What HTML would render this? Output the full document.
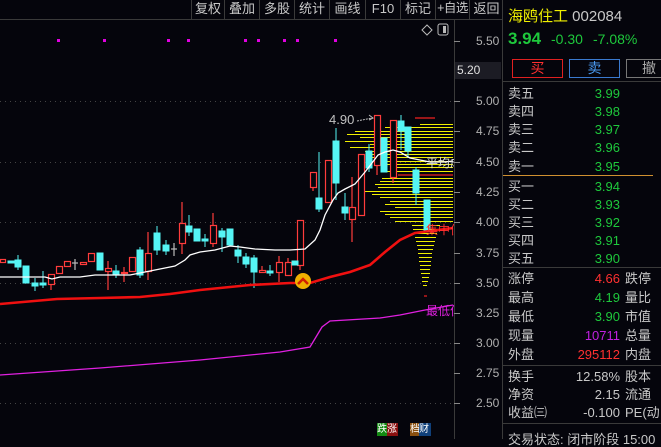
<!DOCTYPE html>
<html><head><meta charset="utf-8"><style>
*{margin:0;padding:0;box-sizing:border-box}
body{width:661px;height:439px;background:#05050c;overflow:hidden;position:relative;font-family:"Liberation Sans","Noto Sans CJK SC",sans-serif;color:#c8c8c8}
.a{position:absolute;white-space:nowrap}
.tb{position:absolute;top:0;height:19px;border-left:1px solid #3a3a3a;font-size:13px;color:#c8c8c8;text-align:center;line-height:17px;white-space:nowrap;overflow:hidden}
.l{position:absolute;left:508px;font-size:13px;color:#c8c8c8;line-height:14px}
.v{position:absolute;right:41px;font-size:13px;line-height:14px;text-align:right}
.r{position:absolute;left:625px;font-size:13px;color:#c8c8c8;line-height:14px}
.g{color:#1ec83c}
.ax{position:absolute;left:476px;font-size:12px;color:#b0b0b0;line-height:12px}
</style></head><body>
<div class="a" style="left:0;top:19px;width:502px;height:1px;background:#3a3a3a"></div>
<div class="tb" style="left:191px;width:33px">复权</div>
<div class="tb" style="left:224px;width:35px">叠加</div>
<div class="tb" style="left:259px;width:35px">多股</div>
<div class="tb" style="left:294px;width:35px">统计</div>
<div class="tb" style="left:329px;width:36px">画线</div>
<div class="tb" style="left:365px;width:35px">F10</div>
<div class="tb" style="left:400px;width:35px">标记</div>
<div class="tb" style="left:435px;width:34px;font-size:12.5px;letter-spacing:-0.5px">+自选</div>
<div class="tb" style="left:469px;width:34px">返回</div>
<div class="a" style="left:502px;top:0;width:1px;height:439px;background:#3a3a3a"></div>
<div class="a" style="left:454px;top:20px;width:1px;height:419px;background:#3a3a3a"></div>

<svg class="a" style="left:0;top:0" width="502" height="439">
<g stroke="#444" stroke-dasharray="1,4" stroke-width="1">
<line x1="0" y1="101.5" x2="454" y2="101.5"/><line x1="0" y1="162.5" x2="454" y2="162.5"/><line x1="0" y1="222.5" x2="454" y2="222.5"/><line x1="0" y1="283.5" x2="454" y2="283.5"/><line x1="0" y1="343.5" x2="454" y2="343.5"/><line x1="0" y1="403.5" x2="454" y2="403.5"/>
</g>
<g stroke="#888"><line x1="454" y1="41.5" x2="460" y2="41.5"/><line x1="454" y1="101.5" x2="460" y2="101.5"/><line x1="454" y1="131.5" x2="460" y2="131.5"/><line x1="454" y1="162.5" x2="460" y2="162.5"/><line x1="454" y1="192.5" x2="460" y2="192.5"/><line x1="454" y1="222.5" x2="460" y2="222.5"/><line x1="454" y1="253.5" x2="460" y2="253.5"/><line x1="454" y1="283.5" x2="460" y2="283.5"/><line x1="454" y1="313.5" x2="460" y2="313.5"/><line x1="454" y1="343.5" x2="460" y2="343.5"/><line x1="454" y1="373.5" x2="460" y2="373.5"/><line x1="454" y1="403.5" x2="460" y2="403.5"/></g>
<g fill="#e000e0"><rect x="57" y="39" width="3" height="3"/><rect x="103" y="39" width="3" height="3"/><rect x="167" y="39" width="3" height="3"/><rect x="187" y="39" width="3" height="3"/><rect x="244" y="39" width="3" height="3"/><rect x="257" y="39" width="3" height="3"/><rect x="283" y="39" width="3" height="3"/><rect x="296" y="39" width="3" height="3"/><rect x="334" y="39" width="3" height="3"/></g>
<path d="M422 30 l5 -5 l5 5 l-5 5z" fill="none" stroke="#bbb"/>
<rect x="438" y="24" width="10" height="11" rx="2" fill="none" stroke="#bbb"/><rect x="443" y="26" width="3" height="7" fill="#bbb"/>
<g stroke="#f0f000" stroke-width="1">
<line x1="420" y1="124.5" x2="453" y2="124.5"/><line x1="385" y1="127.5" x2="453" y2="127.5"/><line x1="355" y1="131.5" x2="453" y2="131.5"/><line x1="347" y1="134.5" x2="453" y2="134.5"/><line x1="360" y1="137.5" x2="453" y2="137.5"/><line x1="345" y1="141.5" x2="453" y2="141.5"/><line x1="370" y1="144.5" x2="453" y2="144.5"/><line x1="350" y1="147.5" x2="453" y2="147.5"/><line x1="365" y1="151.5" x2="453" y2="151.5"/><line x1="372" y1="154.5" x2="453" y2="154.5"/><line x1="370" y1="157.5" x2="453" y2="157.5"/><line x1="380" y1="161.5" x2="453" y2="161.5"/><line x1="375" y1="164.5" x2="453" y2="164.5"/><line x1="395" y1="167.5" x2="453" y2="167.5"/><line x1="385" y1="171.5" x2="453" y2="171.5"/><line x1="382" y1="178.5" x2="453" y2="178.5"/><line x1="380" y1="181.5" x2="453" y2="181.5"/><line x1="375" y1="184.5" x2="453" y2="184.5"/><line x1="378" y1="187.5" x2="453" y2="187.5"/><line x1="365" y1="191.5" x2="453" y2="191.5"/><line x1="372" y1="194.5" x2="453" y2="194.5"/><line x1="380" y1="197.5" x2="453" y2="197.5"/><line x1="390" y1="201.5" x2="453" y2="201.5"/><line x1="385" y1="204.5" x2="453" y2="204.5"/><line x1="395" y1="207.5" x2="453" y2="207.5"/><line x1="380" y1="211.5" x2="453" y2="211.5"/><line x1="385" y1="214.5" x2="453" y2="214.5"/><line x1="390" y1="217.5" x2="453" y2="217.5"/><line x1="395" y1="221.5" x2="453" y2="221.5"/>
<line x1="412" y1="225.5" x2="440" y2="225.5"/><line x1="413" y1="229.5" x2="438" y2="229.5"/><line x1="414" y1="233.5" x2="437" y2="233.5"/><line x1="415" y1="237.5" x2="436" y2="237.5"/><line x1="416" y1="241.5" x2="435" y2="241.5"/><line x1="417" y1="245.5" x2="434" y2="245.5"/><line x1="418" y1="249.5" x2="433" y2="249.5"/><line x1="418" y1="253.5" x2="432" y2="253.5"/><line x1="419" y1="257.5" x2="432" y2="257.5"/><line x1="419" y1="261.5" x2="431" y2="261.5"/><line x1="420" y1="265.5" x2="431" y2="265.5"/><line x1="420" y1="269.5" x2="430" y2="269.5"/><line x1="421" y1="273.5" x2="430" y2="273.5"/><line x1="422" y1="277.5" x2="429" y2="277.5"/><line x1="422" y1="281.5" x2="428" y2="281.5"/><line x1="423" y1="285.5" x2="427" y2="285.5"/>
</g>
<g stroke="#f02020" stroke-width="1.2"><line x1="415" y1="118" x2="435" y2="118"/><line x1="398" y1="175" x2="453" y2="175"/><line x1="424" y1="296" x2="427" y2="296"/></g>
<g stroke-width="1.2">
<g stroke="#ff3c3c" fill="#05050c">
<rect x="0.5" y="259.5" width="5" height="3"/><line x1="51" y1="285" x2="51" y2="290"/><rect x="48.5" y="274.5" width="6" height="10"/><rect x="56.5" y="266.5" width="6" height="7"/><rect x="64.5" y="261.5" width="6" height="5"/><rect x="80.5" y="262.5" width="6" height="2"/><rect x="88.5" y="253.5" width="6" height="8"/>
<line x1="108" y1="261" x2="108" y2="290"/><rect x="105.5" y="268.5" width="6" height="3"/><line x1="124" y1="267" x2="124" y2="282"/><rect x="121.5" y="272.5" width="6" height="1"/><rect x="129.5" y="257.5" width="6" height="14"/>
<line x1="148" y1="232" x2="148" y2="280"/><rect x="145.5" y="253.5" width="6" height="18"/><line x1="182" y1="202" x2="182" y2="254"/><rect x="179.5" y="223.5" width="6" height="20"/><line x1="213" y1="213" x2="213" y2="247"/><rect x="210.5" y="225.5" width="6" height="18"/>
<line x1="262" y1="266" x2="262" y2="272"/><rect x="259.5" y="270.5" width="6" height="2"/><line x1="279" y1="256" x2="279" y2="282"/><rect x="276.5" y="262.5" width="6" height="10"/><line x1="288" y1="258" x2="288" y2="276"/><rect x="285.5" y="262.5" width="6" height="13"/>
<line x1="300" y1="260" x2="300" y2="270"/><rect x="297.5" y="220.5" width="6" height="45"/><line x1="313" y1="187" x2="313" y2="191"/><rect x="310.5" y="172.5" width="6" height="15"/>
<rect x="325.5" y="160.5" width="6" height="42"/><line x1="352" y1="177" x2="352" y2="242"/><rect x="349.5" y="207.5" width="6" height="12"/><rect x="358.5" y="154.5" width="6" height="61"/><line x1="377" y1="165" x2="377" y2="175"/><rect x="374.5" y="115.5" width="6" height="50"/><line x1="393" y1="177" x2="393" y2="183"/><rect x="390.5" y="120.5" width="6" height="57"/>
</g>
<g stroke="#bbb"><line x1="75" y1="259" x2="75" y2="270"/><line x1="72" y1="263" x2="78" y2="263"/><line x1="174" y1="243" x2="174" y2="256"/><line x1="171" y1="249" x2="177" y2="249"/></g>
<g fill="#55f5f5" stroke="#55f5f5" stroke-width="1">
<rect x="8" y="261" width="6" height="2"/><line x1="18" y1="255" x2="18" y2="270"/><rect x="15" y="260" width="6" height="7"/><rect x="23" y="266" width="6" height="17"/><line x1="35" y1="278" x2="35" y2="291"/><rect x="32" y="283" width="6" height="3"/><line x1="43" y1="271" x2="43" y2="288"/><rect x="40" y="283" width="6" height="2"/>
<rect x="97" y="253" width="6" height="17"/><line x1="116" y1="265" x2="116" y2="278"/><rect x="113" y="271" width="6" height="3"/><line x1="140" y1="247" x2="140" y2="278"/><rect x="137" y="250" width="6" height="25"/>
<line x1="157" y1="226" x2="157" y2="255"/><rect x="154" y="233" width="6" height="17"/><line x1="166" y1="240" x2="166" y2="255"/><rect x="163" y="245" width="6" height="6"/><line x1="189" y1="215" x2="189" y2="236"/><rect x="186" y="226" width="6" height="6"/><rect x="194" y="229" width="6" height="12"/><line x1="205" y1="234" x2="205" y2="247"/><rect x="202" y="239" width="6" height="2"/>
<line x1="222" y1="228" x2="222" y2="252"/><rect x="219" y="231" width="6" height="6"/><rect x="227" y="229" width="6" height="16"/><line x1="238" y1="245" x2="238" y2="263"/><rect x="235" y="250" width="6" height="6"/><line x1="246" y1="253" x2="246" y2="268"/><rect x="243" y="257" width="6" height="7"/><line x1="254" y1="255" x2="254" y2="288"/><rect x="251" y="258" width="6" height="14"/><line x1="270" y1="265" x2="270" y2="276"/><rect x="267" y="271" width="6" height="2"/><rect x="292" y="261" width="6" height="4"/>
<line x1="319" y1="152" x2="319" y2="212"/><rect x="316" y="198" width="6" height="11"/><line x1="336" y1="128" x2="336" y2="200"/><rect x="333" y="141" width="6" height="42"/><line x1="345" y1="193" x2="345" y2="220"/><rect x="342" y="207" width="6" height="6"/>
<line x1="369" y1="144" x2="369" y2="172"/><rect x="366" y="151" width="6" height="17"/><rect x="381" y="138" width="6" height="34"/><line x1="401" y1="115" x2="401" y2="150"/><rect x="398" y="121" width="6" height="10"/><line x1="408" y1="150" x2="408" y2="158"/><rect x="405" y="127" width="6" height="24"/><line x1="416" y1="167" x2="416" y2="205"/><rect x="413" y="170" width="6" height="23"/><rect x="424" y="200" width="6" height="30"/>
</g></g>
<polyline fill="none" stroke="#fff" stroke-width="1.3" points="0,277 45,277 52,279 60,277 80,277 95,275 130,275 145,272 165,268 175,266 185,260 190,255 200,252 215,250 230,246 240,247 255,249 275,250 290,250 305,249 315,240 320,230 325,215 333,200 338,193 345,189 355,184 365,172 372,163 378,155 385,152 393,150 400,152 410,158 420,160 430,162 445,162 453,161"/>
<polyline fill="none" stroke="#f01010" stroke-width="2.6" points="0,304 57,299 100,298 140,297 170,294 200,290 230,287 250,285 290,283 310,283 330,277 350,272 370,265 385,252 400,240 415,233 430,231 453,228"/>
<polyline fill="none" stroke="#e020e0" stroke-width="1.3" points="0,375 100,368 200,360 280,352 310,347 316,337 322,327 330,321 380,318 400,315 425,310 453,305"/>
<circle cx="303" cy="281" r="8" fill="#f0b000"/><path d="M298 284 l5 -5 l5 5" fill="none" stroke="#d02000" stroke-width="2.5"/>
<path d="M357 121 l15 -3" stroke="#bbb" fill="none" stroke-dasharray="2,1"/><path d="M369 115 l4 3 l-4 2" stroke="#bbb" fill="none"/>
</svg>
<div class="a" style="left:329px;top:112px;font-size:13px;color:#c0c0c0">4.90</div>
<div class="a" style="left:426px;top:154px;font-size:12px;color:#ddd;width:28px;overflow:hidden">平均成</div>
<div class="a" style="left:426px;top:221px;font-size:12px;color:#ff3030;width:28px;overflow:hidden">集中位</div>
<div class="a" style="left:426px;top:302px;font-size:12px;color:#e020e0;width:28px;overflow:hidden">最低位</div>
<div class="a" style="left:377px;top:423px;width:10px;height:13px;background:#128a12;font-size:10px;color:#fff;line-height:13px">跌</div>
<div class="a" style="left:387px;top:423px;width:11px;height:13px;background:#8a1010;font-size:10px;color:#fff;line-height:13px">涨</div>
<div class="a" style="left:410px;top:423px;width:9px;height:13px;background:#8a5010;font-size:10px;color:#fff;line-height:13px">档</div>
<div class="a" style="left:419px;top:423px;width:12px;height:13px;background:#10407a;font-size:10px;color:#fff;line-height:13px">财</div>

<div class="ax" style="top:35px">5.50</div>
<div class="a" style="left:455px;top:62px;width:46px;height:17px;background:#1c1c24"></div>
<div class="ax" style="left:457px;top:64px;color:#e0e0e0">5.20</div>
<div class="ax" style="top:95px">5.00</div><div class="ax" style="top:125px">4.75</div><div class="ax" style="top:156px">4.50</div><div class="ax" style="top:186px">4.25</div><div class="ax" style="top:216px">4.00</div><div class="ax" style="top:247px">3.75</div><div class="ax" style="top:277px">3.50</div><div class="ax" style="top:307px">3.25</div><div class="ax" style="top:337px">3.00</div><div class="ax" style="top:367px">2.75</div><div class="ax" style="top:397px">2.50</div>

<div class="a" style="left:508px;top:5px;font-size:15px;color:#f0f000">海鸥住工 <span style="color:#c8c8c8">002084</span></div>
<div class="a" style="left:508px;top:29px;font-size:17px;font-weight:bold;color:#1ec83c">3.94</div>
<div class="a" style="left:551px;top:31px;font-size:14px;color:#1ec83c">-0.30</div>
<div class="a" style="left:593px;top:31px;font-size:14px;color:#1ec83c">-7.08%</div>
<div class="a" style="left:512px;top:59px;width:51px;height:19px;border:1px solid #e02020;color:#ff3030;font-size:14px;text-align:center;line-height:17px">买</div>
<div class="a" style="left:569px;top:59px;width:51px;height:19px;border:1px solid #3a7ad0;color:#4a9af0;font-size:14px;text-align:center;line-height:17px">卖</div>
<div class="a" style="left:626px;top:59px;width:40px;height:19px;border:1px solid #777;color:#aaa;font-size:14px;line-height:17px;padding-left:15px">撤</div>
<div class="a" style="left:503px;top:81px;width:158px;height:1px;background:#3a3a3a"></div>
<div class="l" style="top:87px">卖五</div><div class="v g" style="top:87px">3.99</div>
<div class="l" style="top:105px">卖四</div><div class="v g" style="top:105px">3.98</div>
<div class="l" style="top:123px">卖三</div><div class="v g" style="top:123px">3.97</div>
<div class="l" style="top:141px">卖二</div><div class="v g" style="top:141px">3.96</div>
<div class="l" style="top:160px">卖一</div><div class="v g" style="top:160px">3.95</div>
<div class="a" style="left:503px;top:175px;width:150px;height:1px;background:#d09030"></div>
<div class="l" style="top:180px">买一</div><div class="v g" style="top:180px">3.94</div>
<div class="l" style="top:198px">买二</div><div class="v g" style="top:198px">3.93</div>
<div class="l" style="top:216px">买三</div><div class="v g" style="top:216px">3.92</div>
<div class="l" style="top:234px">买四</div><div class="v g" style="top:234px">3.91</div>
<div class="l" style="top:252px">买五</div><div class="v g" style="top:252px">3.90</div>
<div class="a" style="left:503px;top:267px;width:158px;height:1px;background:#3a3a3a"></div>
<div class="l" style="top:272px">涨停</div><div class="v" style="top:272px;color:#ff3030">4.66</div><div class="r" style="top:272px">跌停</div>
<div class="l" style="top:291px">最高</div><div class="v g" style="top:291px">4.19</div><div class="r" style="top:291px">量比</div>
<div class="l" style="top:310px">最低</div><div class="v g" style="top:310px">3.90</div><div class="r" style="top:310px">市值</div>
<div class="l" style="top:329px">现量</div><div class="v" style="top:329px;color:#c020e0">10711</div><div class="r" style="top:329px">总量</div>
<div class="l" style="top:348px">外盘</div><div class="v" style="top:348px;color:#ff3030">295112</div><div class="r" style="top:348px">内盘</div>
<div class="a" style="left:503px;top:365px;width:158px;height:1px;background:#3a3a3a"></div>
<div class="l" style="top:370px">换手</div><div class="v" style="top:370px">12.58%</div><div class="r" style="top:370px">股本</div>
<div class="l" style="top:388px">净资</div><div class="v" style="top:388px">2.15</div><div class="r" style="top:388px">流通</div>
<div class="l" style="top:406px">收益㈢</div><div class="v" style="top:406px">-0.100</div><div class="r" style="top:406px">PE(动</div>
<div class="a" style="left:503px;top:423px;width:158px;height:1px;background:#3a3a3a"></div>
<div class="l" style="top:433px">交易状态: 闭市阶段 15:00</div>
</body></html>
